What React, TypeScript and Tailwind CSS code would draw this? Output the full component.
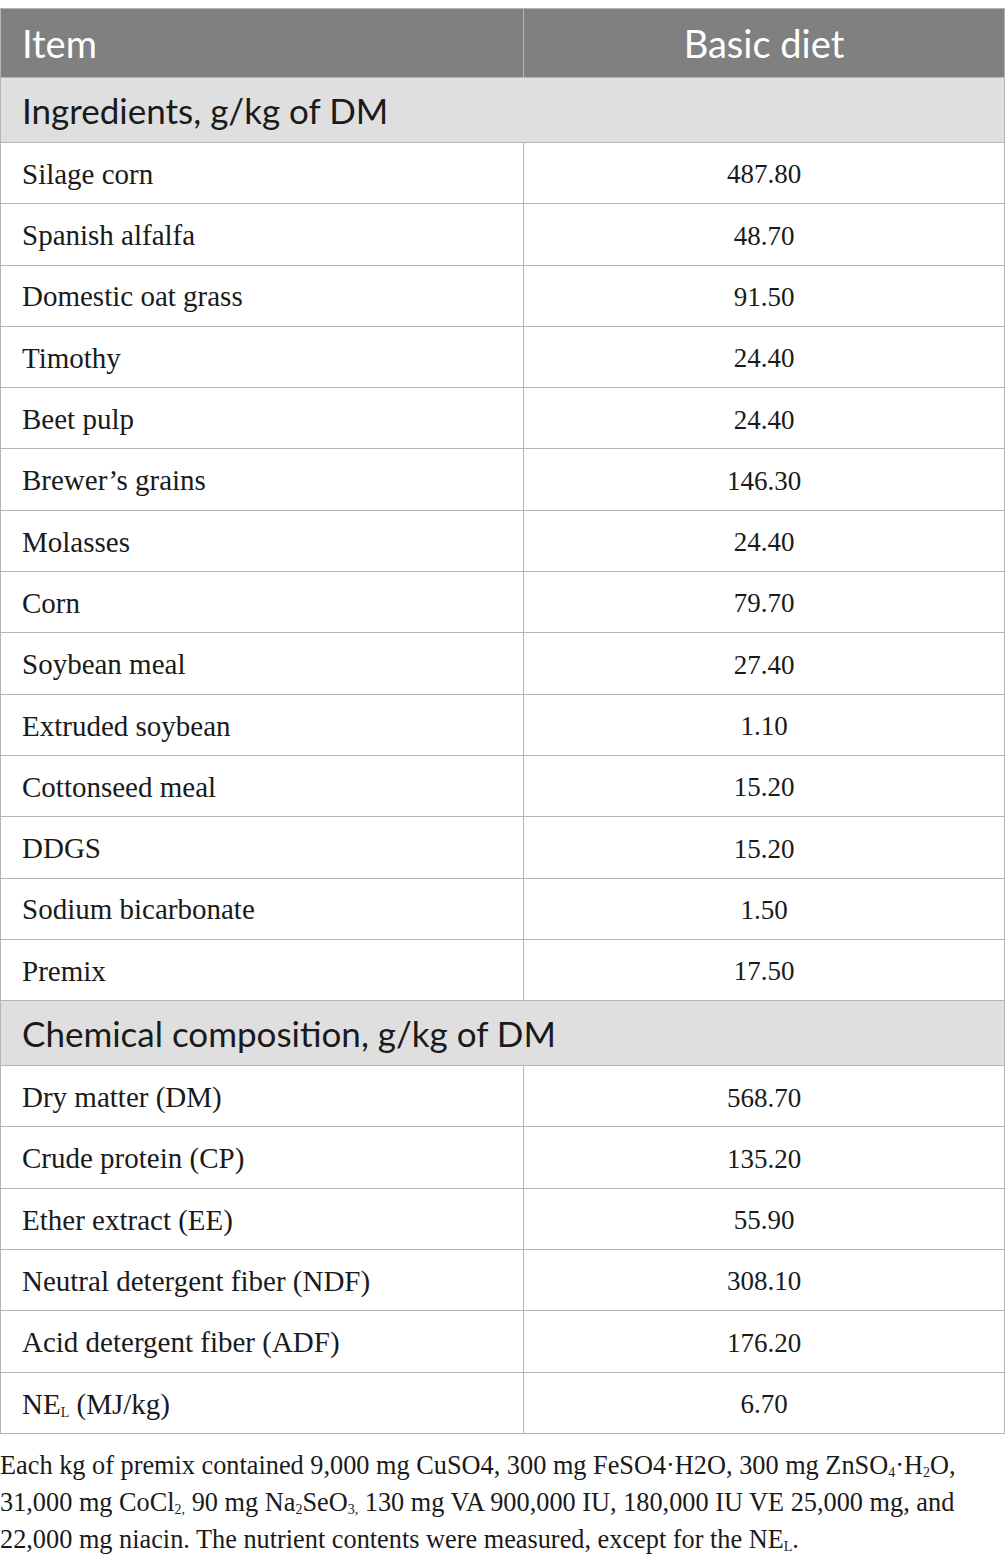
import React from 'react';

const Sub = ({ children }: { children: React.ReactNode }) => (
  <sub className="text-[14px] align-baseline relative top-[3px]">{children}</sub>
);

const ingredients: [React.ReactNode, string][] = [
  ['Silage corn', '487.80'],
  ['Spanish alfalfa', '48.70'],
  ['Domestic oat grass', '91.50'],
  ['Timothy', '24.40'],
  ['Beet pulp', '24.40'],
  ['Brewer\u2019s grains', '146.30'],
  ['Molasses', '24.40'],
  ['Corn', '79.70'],
  ['Soybean meal', '27.40'],
  ['Extruded soybean', '1.10'],
  ['Cottonseed meal', '15.20'],
  ['DDGS', '15.20'],
  ['Sodium bicarbonate', '1.50'],
  ['Premix', '17.50'],
];

const chemical: [React.ReactNode, string][] = [
  ['Dry matter (DM)', '568.70'],
  ['Crude protein (CP)', '135.20'],
  ['Ether extract (EE)', '55.90'],
  ['Neutral detergent fiber (NDF)', '308.10'],
  ['Acid detergent fiber (ADF)', '176.20'],
  [
    <>
      NE<Sub>L</Sub> (MJ/kg)
    </>,
    '6.70',
  ],
];

const BodyRow = ({ label, value }: { label: React.ReactNode; value: string }) => (
  <tr className="h-[61.3px]">
    <td className="border border-[#b5b5b5] pl-[21px] pt-[3px] text-[29px] text-[#1a1a1a]">{label}</td>
    <td className="border border-[#b5b5b5] pt-[3px] text-center text-[27px] text-[#1a1a1a]">{value}</td>
  </tr>
);

const SectionRow = ({ title }: { title: string }) => (
  <tr className="h-[65px] bg-[#e0dfe0]">
    <td colSpan={2} className="border border-[#b5b5b5] pl-[21px] text-[35px] text-[#1a1a1a] font-['Lato',sans-serif]">
      {title}
    </td>
  </tr>
);

export default function App() {
  return (
    <div className="w-[1005px] bg-white pt-[8px] font-['Liberation_Serif',serif]">
      <table className="w-[1005px] border-collapse table-fixed">
        <colgroup>
          <col className="w-[523px]" />
          <col />
        </colgroup>
        <thead>
          <tr className="h-[69px] bg-[#7f807f] text-white font-['Lato',sans-serif] text-[38px]">
            <th className="border border-[#b5b5b5] pl-[21px] text-left font-normal">Item</th>
            <th className="border border-[#b5b5b5] text-center font-normal">Basic diet</th>
          </tr>
        </thead>
        <tbody>
          <SectionRow title="Ingredients, g/kg of DM" />
          {ingredients.map(([label, value], i) => (
            <BodyRow key={i} label={label} value={value} />
          ))}
          <SectionRow title="Chemical composition, g/kg of DM" />
          {chemical.map(([label, value], i) => (
            <BodyRow key={i} label={label} value={value} />
          ))}
        </tbody>
      </table>
      <p className="pt-[13px] text-[26.3px] leading-[37px] text-[#1a1a1a] whitespace-nowrap">
        Each kg of premix contained 9,000 mg CuSO4, 300 mg FeSO4·H2O, 300 mg ZnSO<Sub>4</Sub>·H<Sub>2</Sub>O,
        <br />
        31,000 mg CoCl<Sub>2,</Sub> 90 mg Na<Sub>2</Sub>SeO<Sub>3,</Sub> 130 mg VA 900,000 IU, 180,000 IU VE 25,000 mg, and
        <br />
        22,000 mg niacin. The nutrient contents were measured, except for the NE<Sub>L</Sub>.
      </p>
    </div>
  );
}
